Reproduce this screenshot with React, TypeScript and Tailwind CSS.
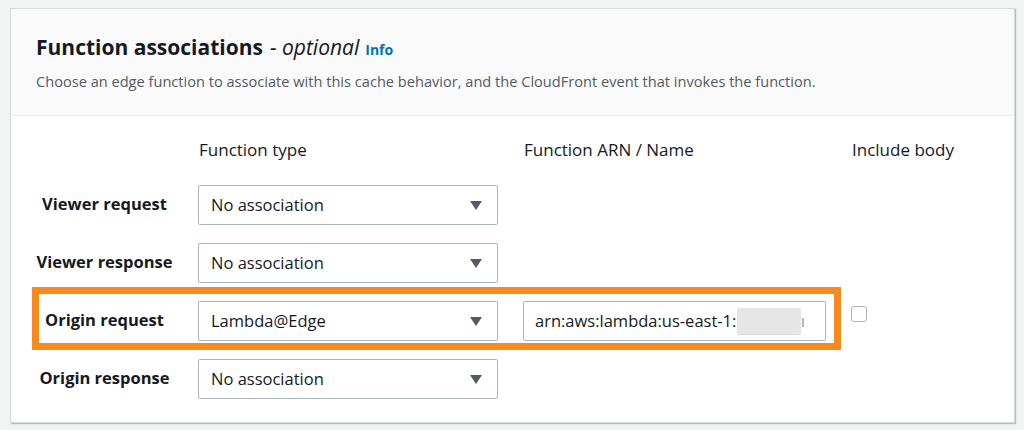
const font = { fontFamily: '"Open Sans", "Liberation Sans", sans-serif' }

function Caret() {
  return (
    <svg width="12" height="9" viewBox="0 0 12 9" className="shrink-0">
      <path d="M0 0 H12 L6 9 Z" fill="#545b64" />
    </svg>
  )
}

function Select({ value }: { value: string }) {
  return (
    <div className="w-[300px] h-[40px] flex items-center justify-between pl-[12px] pr-[15px] bg-white border border-[#aab7b8] rounded-[2px] text-[16.5px] text-[#16191f]">
      <span>{value}</span>
      <Caret />
    </div>
  )
}

const ROWS = [
  { label: 'Viewer request', value: 'No association' },
  { label: 'Viewer response', value: 'No association' },
  { label: 'Origin request', value: 'Lambda@Edge', arn: true },
  { label: 'Origin response', value: 'No association' },
]

export default function App() {
  return (
    <div className="w-[1024px] h-[430px] bg-[#f2f3f3] pl-[10px] pt-[8px]" style={font}>
      <div className="w-[1005px] h-[415px] bg-white border border-[#d5dbdb] shadow-[1px_1px_1px_rgba(0,28,36,0.25)]">
        {/* header */}
        <div className="bg-[#fafafa] border-b border-[#eaeded] px-[25px] pt-[24px] pb-[24px]">
          <h2 className="flex items-baseline text-[21px] leading-[28px] font-bold text-[#16191f]">
            Function associations
            <span className="font-normal italic ml-[7px]">- optional</span>
            <span className="ml-[6px] text-[14px] font-bold text-[#0073bb]">Info</span>
          </h2>
          <p className="mt-[7px] text-[14.6px] leading-[20px] text-[#545b64]">
            Choose an edge function to associate with this cache behavior, and the CloudFront event that invokes the function.
          </p>
        </div>

        {/* body */}
        <div className="px-[25px] pt-[22px]">
          <div className="grid grid-cols-[137px_300px_303px_auto] gap-x-[25px] text-[17px] leading-[24px] text-[#16191f]">
            <div />
            <div className="pl-[1px]">Function type</div>
            <div className="pl-[1px]">Function ARN / Name</div>
            <div className="pl-[1px]">Include body</div>
          </div>

          <div className="mt-[23px] flex flex-col gap-[18px]">
            {ROWS.map(r => (
              <div key={r.label} className="relative grid grid-cols-[137px_300px_303px_auto] gap-x-[25px] items-center">
                <div className="text-center text-[16.5px] font-bold text-[#16191f] -mt-[2px]">{r.label}</div>
                <Select value={r.value} />
                {r.arn ? (
                  <>
                    <div className="h-[40px] flex items-center pl-[11px] bg-white border border-[#aab7b8] rounded-[2px] overflow-hidden text-[16.5px] text-[#16191f] whitespace-nowrap">
                      <span>arn:aws:lambda:us-east-1:</span>
                      {/* redacted part of the ARN */}
                      <span className="ml-[1px] w-[64px] h-[26px] shrink-0 bg-[#e6e6e6] rounded-[2px] shadow-[0_1px_1px_rgba(0,0,0,0.15)]" />
                      <span className="ml-[1px] w-[2px] h-[9px] mt-[3px] bg-[#b5b5b5]" />
                    </div>
                    <div className="self-start mt-[5px] w-[16px] h-[16px] bg-white border border-[#aab7b8] rounded-[3px]" />
                    <div className="absolute -top-[14px] -left-[4px] w-[809px] h-[63px] border-[7px] border-[#f7891f] pointer-events-none" />
                  </>
                ) : (
                  <>
                    <div />
                    <div />
                  </>
                )}
              </div>
            ))}
          </div>
        </div>
      </div>
    </div>
  )
}
